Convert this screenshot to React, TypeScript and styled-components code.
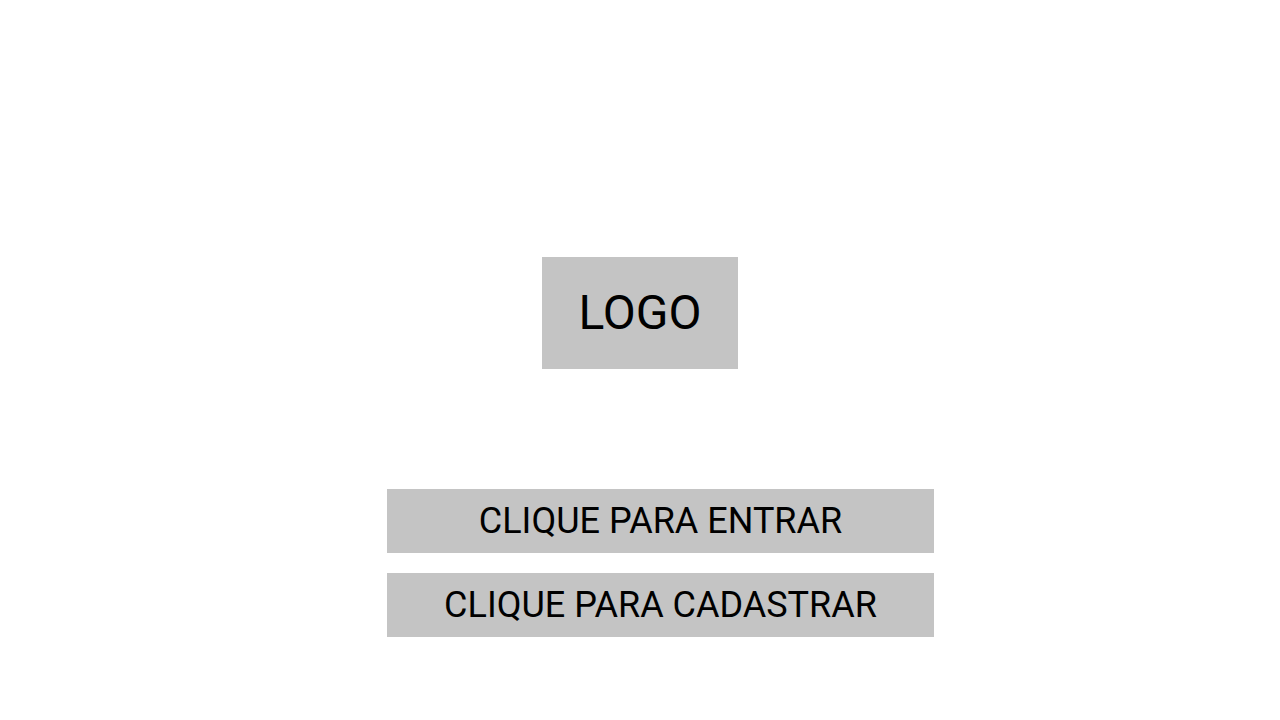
import React from "react";
import styled, { createGlobalStyle } from "styled-components";

const GlobalStyle = createGlobalStyle`
  *, *::before, *::after {
    box-sizing: border-box;
  }
  body {
    margin: 0;
    background: #ffffff;
    color: #000000;
    font-family: Roboto, "Liberation Sans", sans-serif;
  }
`;

const Page = styled.main`
  display: flex;
  flex-direction: column;
  align-items: center;
  gap: 120px;
  min-height: 100vh;
  padding: 257px 24px 24px;
`;

const Logo = styled.h1`
  display: flex;
  align-items: center;
  justify-content: center;
  width: 196px;
  height: 112px;
  margin: 0;
  background: #c4c4c4;
  font-size: 48px;
  font-weight: 400;
  line-height: 56px;
`;

const Actions = styled.nav`
  display: flex;
  flex-direction: column;
  gap: 20px;
  width: 100%;
  max-width: 588px;
  padding-left: 41px;
`;

const ActionButton = styled.button`
  min-height: 64px;
  padding: 0 16px;
  border: 0;
  background: #c4c4c4;
  color: inherit;
  font-family: inherit;
  font-size: 36px;
  line-height: 42px;
  text-align: center;
  cursor: pointer;
`;

export default function App() {
  return (
    <>
      <GlobalStyle />
      <Page>
        <Logo>LOGO</Logo>
        <Actions>
          <ActionButton type="button">CLIQUE PARA ENTRAR</ActionButton>
          <ActionButton type="button">CLIQUE PARA CADASTRAR</ActionButton>
        </Actions>
      </Page>
    </>
  );
}
